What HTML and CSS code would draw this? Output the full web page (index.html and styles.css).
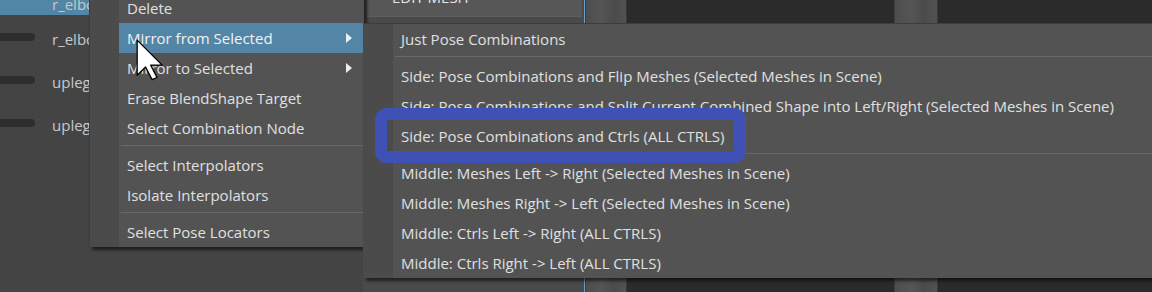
FILE: index.html
```html
<!DOCTYPE html>
<html lang="en">
<head>
    <meta charset="UTF-8">
    <title>Pose Editor - Mirror menu</title>
    <link rel="stylesheet" href="styles.css">
</head>
<body>
    <div class="app">
        <div class="outliner">
            <div class="row selected"><span class="bar"></span><span class="name">r_elbow_up</span></div>
            <div class="row"><span class="bar"></span><span class="name">r_elbow_dn</span></div>
            <div class="row"><span class="bar"></span><span class="name">upleg_out</span></div>
            <div class="row"><span class="bar"></span><span class="name">upleg_in</span></div>
        </div>
        <div class="editor">
            <div class="edit-btn">EDIT MESH</div>
        </div>
        <div class="divider"></div>
        <div class="strip"></div>
        <div class="view"></div>
        <div class="strip"></div>
        <div class="view"></div>
    </div>

    <!-- context menu -->
    <div class="menu main-menu">
        <div class="gutter"></div>
        <div class="items">
            <div class="item">Delete</div>
            <div class="item active">Mirror from Selected<span class="arrow"></span></div>
            <div class="item">Mirror to Selected<span class="arrow"></span></div>
            <div class="item">Erase BlendShape Target</div>
            <div class="item">Select Combination Node</div>
            <div class="sep"></div>
            <div class="item">Select Interpolators</div>
            <div class="item">Isolate Interpolators</div>
            <div class="sep"></div>
            <div class="item">Select Pose Locators</div>
        </div>
    </div>

    <!-- mirror submenu -->
    <div class="menu sub-menu">
        <div class="gutter"></div>
        <div class="items">
            <div class="item">Just Pose Combinations</div>
            <div class="sep"></div>
            <div class="item">Side: Pose Combinations and Flip Meshes (Selected Meshes in Scene)</div>
            <div class="item">Side: Pose Combinations and Split Current Combined Shape into Left/Right (Selected Meshes in Scene)</div>
            <div class="item">Side: Pose Combinations and Ctrls (ALL CTRLS)</div>
            <div class="sep"></div>
            <div class="item">Middle: Meshes Left -&gt; Right (Selected Meshes in Scene)</div>
            <div class="item">Middle: Meshes Right -&gt; Left (Selected Meshes in Scene)</div>
            <div class="item">Middle: Ctrls Left -&gt; Right (ALL CTRLS)</div>
            <div class="item">Middle: Ctrls Right -&gt; Left (ALL CTRLS)</div>
        </div>
    </div>

    <div class="annotation"></div>

    <svg class="cursor" viewBox="0 0 12 18" width="28" height="42">
        <polygon points="0.5,0.5 0.5,15.5 4.1,12 6.9,17.4 9,16.5 6.3,11.2 11.2,11.2" fill="#fff" stroke="#000" stroke-width="0.55" stroke-linejoin="round"/>
    </svg>
</body>
</html>
```

FILE: styles.css
```css
body {
    margin: 0;
    overflow: hidden;
    background: #444;
    font-family: "Open Sans", "Noto Sans", sans-serif;
    font-size: 15px;
    color: #e0e0e0;
}
.app {
    display: flex;
    height: 292px;
}
.outliner {
    width: 363px;
    margin-top: -28px;
    background: #444;
}
.row {
    display: flex;
    align-items: center;
    height: 43px;
    padding-top: 5px;
    box-sizing: border-box;
}
.row.selected {
    background: #5285a6;
    padding-top: 20px;
    color: #eee;
}
.bar {
    width: 35px;
    height: 8px;
    margin-top: -4px;
    background: #2e2e2e;
    border-radius: 0 4px 4px 0;
}
.row.selected .bar {
    visibility: hidden;
}
.name {
    margin-left: 17px;
    color: #c8c8c8;
    white-space: nowrap;
}
.editor {
    width: 221px;
    background: #4a4a4a;
}
.edit-btn {
    margin: -13px 2px 0 4px;
    height: 29px;
    line-height: 20px;
    padding-left: 25px;
    background: #575757;
    border-bottom: 1px solid #5f5f5f;
    color: #e6e6e6;
}
.divider {
    width: 1px;
    background: #6d9fc4;
}
.strip {
    width: 41px;
    background: linear-gradient(to right, #3c3c3c 0, #3c3c3c 1px, #4d4d4d 1px, #555 40%, #4b4b4b 70%, #525252 100%);
    border-right: 1px solid #383838;
}
.strip + .view + .strip {
    width: 43px;
}
.view {
    width: 267px;
    background: #2b2b2b;
}
.view:last-child {
    flex: 1;
}

/* menus */
.menu {
    position: absolute;
    display: flex;
    background: #535353;
    box-shadow: 3px 3px 3px rgba(0, 0, 0, 0.55);
}
.main-menu {
    left: 89px;
    top: -7px;
    width: 274px;
    border-left: 1px solid #3d3d3d;
}
.sub-menu {
    left: 363px;
    top: 23px;
    width: 800px;
    border-top: 1px solid #3d3d3d;
}
.gutter {
    width: 30px;
    background: #4b4b4b;
}
.main-menu .gutter {
    width: 29px;
}
.items {
    flex: 1;
}
.item {
    display: flex;
    align-items: center;
    height: 30px;
    padding-left: 8px;
    white-space: nowrap;
}
.item.active {
    background: #5285a6;
    color: #f2f2f2;
}
.arrow {
    margin-left: auto;
    margin-right: 12px;
    border-left: 6px solid #eee;
    border-top: 5px solid transparent;
    border-bottom: 5px solid transparent;
}
.sep {
    height: 1px;
    margin: 2px 0 4px 2px;
    background: #686868;
}

.annotation {
    position: absolute;
    left: 375px;
    top: 108px;
    width: 371px;
    height: 55px;
    box-sizing: border-box;
    border: 12px solid #3f51b5;
    border-radius: 12px;
}
.cursor {
    position: absolute;
    left: 136px;
    top: 39px;
}
```
